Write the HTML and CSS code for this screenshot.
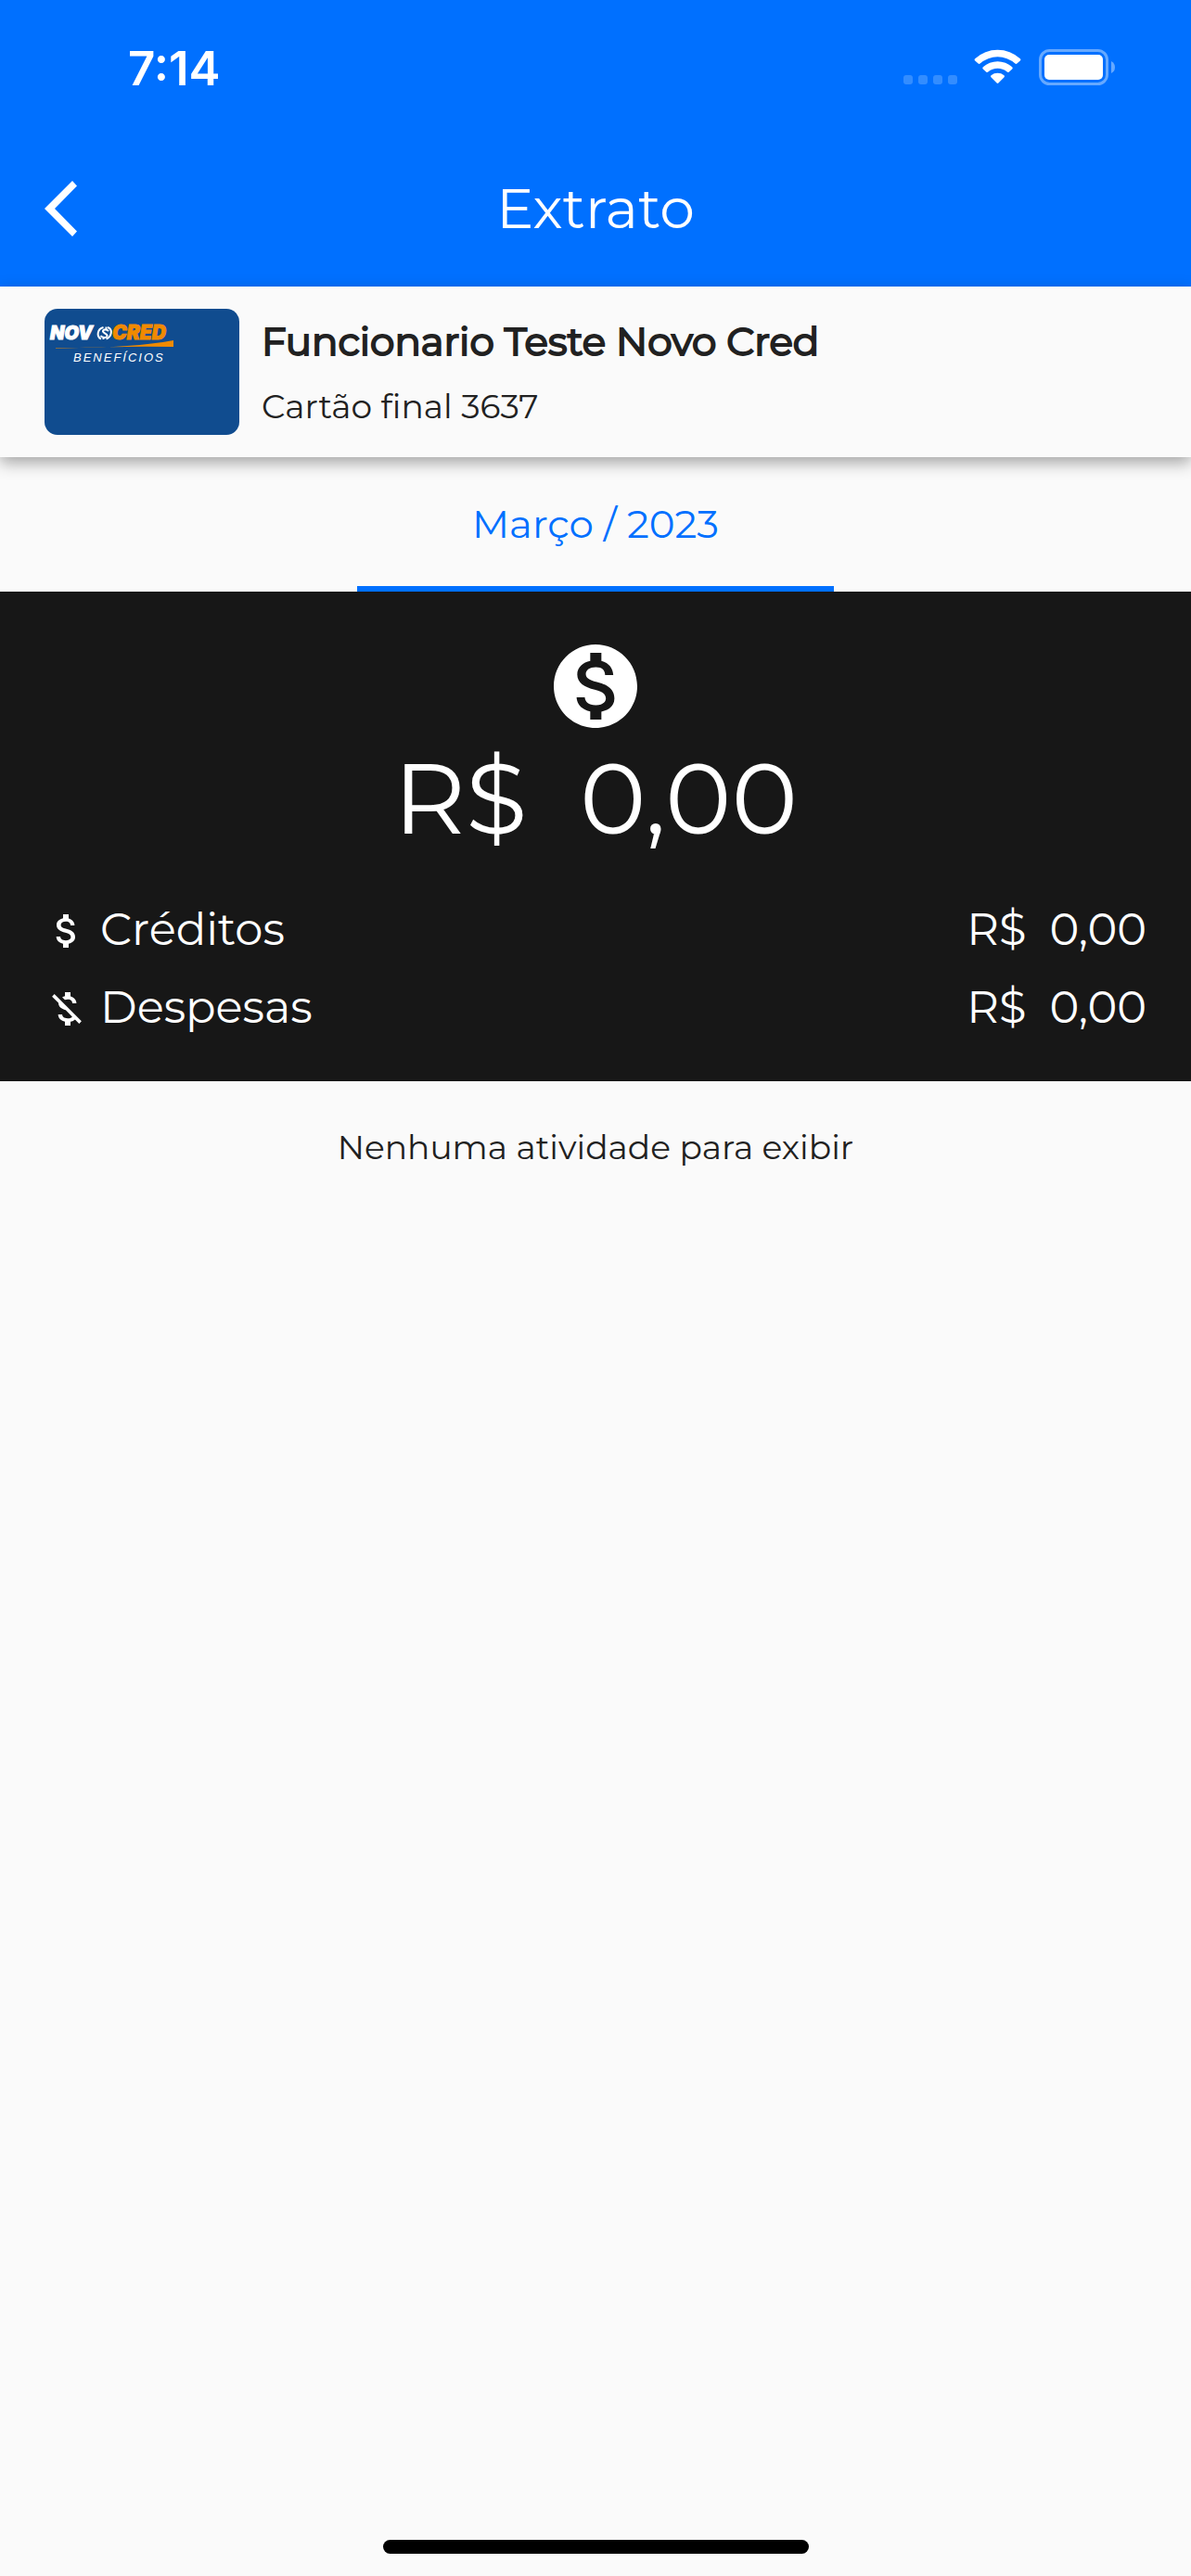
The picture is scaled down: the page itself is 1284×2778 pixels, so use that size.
FILE: index.html
```
<!DOCTYPE html>
<html lang="pt-BR">
<head>
    <meta charset="UTF-8" />
    <meta name="viewport" content="width=device-width, initial-scale=1">
    <title>Extrato</title>
    <link rel="stylesheet" href="styles.css">
</head>

<body>
<header class="header">
    <div class="status-bar">
        <div class="status-time">7:14</div>
        <div class="status-icons">
            <svg class="icon-signal" viewBox="0 0 58 38">
                <rect x="0" y="28" width="10" height="10" rx="3" />
                <rect x="16" y="28" width="10" height="10" rx="3" />
                <rect x="32" y="28" width="10" height="10" rx="3" />
                <rect x="48" y="28" width="10" height="10" rx="3" />
            </svg>
            <svg class="icon-wifi" viewBox="0 0 52 38">
                <path d="M1.2 10.2Q0 11.4 1.2 12.6L4.6 15.6Q5.6 16.4 6.6 15.5A28.5 28.5 0 0 1 44.4 15.5Q45.4 16.4 46.4 15.6L49.8 12.6Q51 11.4 49.8 10.2A36 36 0 0 0 1.2 10.2Z" />
                <path d="M9.8 19.2Q8.6 20.4 9.8 21.5L13.4 24.7Q14.3 25.4 15.3 24.6A15.8 15.8 0 0 1 35.7 24.6Q36.7 25.4 37.6 24.7L41.2 21.5Q42.4 20.4 41.2 19.2A23.5 23.5 0 0 0 9.8 19.2Z" />
                <path d="M18.5 28.2Q17.4 29.3 18.6 30.4L24.6 36.5Q25.5 37.4 26.4 36.5L32.4 30.4Q33.6 29.3 32.5 28.2A11.5 11.5 0 0 0 18.5 28.2Z" />
            </svg>
            <svg class="icon-battery" viewBox="0 0 82 40">
                <rect class="battery-shell" x="1.5" y="1.5" width="72" height="36" rx="10" />
                <rect x="6" y="6" width="63" height="27" rx="5" />
                <path class="battery-cap" d="M78 13Q82 15 82 19.5T78 26Z" />
            </svg>
        </div>
    </div>
    <div class="app-bar">
        <button class="back-button" aria-label="Voltar">
            <svg viewBox="0 0 36 60">
                <path d="M0 30L30 0L35 5.5L11 30L35 54.5L30 60Z" />
            </svg>
        </button>
        <h1 class="app-title">Extrato</h1>
    </div>
</header>

<section class="account">
    <svg class="card" viewBox="0 0 210 136" role="img" aria-label="Novocred Benefícios">
        <defs>
            <linearGradient id="swoosh">
                <stop offset="0" stop-color="#f08a00" stop-opacity="0.5" />
                <stop offset="0.3" stop-color="#f08a00" />
            </linearGradient>
        </defs>
        <rect class="card-bg" width="210" height="136" rx="14" />
        <text class="logo-novo" x="6" y="33">NOV</text>
        <g class="logo-coin">
            <path d="M63.5 20C57 21.500 55.500 30 61 32.500" />
            <path d="M68 20C74 22 72.500 30 66.500 32.500" />
            <path d="M69 24C66.500 21.500 62.500 22.500 63 24.500S68.500 27 67.500 29.500S62 31 60.500 29M66.500 19.500V22M63.500 30.500V33" />
        </g>
        <text class="logo-cred" x="73" y="33">CRED</text>
        <path fill="url(#swoosh)" d="M12 42Q90 43 139 34V41Q80 40 12 43Z" />
        <text class="logo-sub" x="31" y="57">BENEFÍCIOS</text>
    </svg>
    <div class="account-info">
        <div class="account-name">Funcionario Teste Novo Cred</div>
        <div class="account-card">Cartão final 3637</div>
    </div>
</section>

<nav class="months">
    <button class="month active">Março / 2023</button>
</nav>

<section class="summary">
    <svg class="icon-coin" viewBox="0 0 24 24">
        <path d="M12 2C6.480 2 2 6.480 2 12s4.480 10 10 10 10-4.480 10-10S17.520 2 12 2zm1.410 16.090V20h-2.670v-1.930c-1.710-.36-3.160-1.460-3.270-3.400h1.960c.1 1.050.82 1.870 2.650 1.870 1.960 0 2.400-.98 2.400-1.590 0-.83-.44-1.610-2.670-2.140-2.480-.6-4.180-1.620-4.180-3.670 0-1.720 1.390-2.840 3.110-3.210V4h2.670v1.950c1.860.45 2.790 1.860 2.850 3.390H14.300c-.05-1.110-.64-1.870-2.220-1.870-1.500 0-2.400.68-2.400 1.640 0 .84.65 1.390 2.670 1.910s4.180 1.390 4.180 3.910c-.02 1.830-1.380 2.830-3.120 3.160z" />
    </svg>
    <div class="balance">R$&nbsp; 0,00</div>
    <div class="summary-rows">
        <div class="summary-row">
            <svg class="row-icon" viewBox="0 0 24 24">
                <path d="M11.8 10.9c-2.270-.59-3-1.200-3-2.150 0-1.090 1.010-1.850 2.700-1.850 1.780 0 2.440.85 2.500 2.100h2.210c-.07-1.720-1.120-3.300-3.210-3.810V3h-3v2.160c-1.940.42-3.500 1.680-3.500 3.610 0 2.310 1.910 3.460 4.700 4.130 2.500.6 3 1.480 3 2.410 0 .69-.49 1.790-2.700 1.790-2.060 0-2.870-.92-2.980-2.100h-2.200c.12 2.190 1.760 3.420 3.680 3.830V21h3v-2.150c1.950-.37 3.500-1.500 3.500-3.550 0-2.840-2.430-3.810-4.700-4.400z" />
            </svg>
            <span class="row-label">Créditos</span>
            <span class="row-value">R$&nbsp; 0,00</span>
        </div>
        <div class="summary-row">
            <svg class="row-icon" viewBox="0 0 24 24">
                <path d="M12.5 6.9c1.780 0 2.440.85 2.500 2.100h2.210c-.07-1.720-1.120-3.300-3.210-3.810V3h-3v2.160c-.53.12-1.030.3-1.480.54l1.470 1.470c.41-.17.91-.27 1.510-.27zM5.330 4.060L4.060 5.330 7.500 8.770c0 2.080 1.560 3.210 3.910 3.910l3.510 3.510c-.34.48-1.050.91-2.420.91-2.060 0-2.870-.92-2.980-2.100h-2.200c.12 2.190 1.760 3.420 3.680 3.830V21h3v-2.150c.96-.18 1.820-.55 2.450-1.120l2.220 2.220 1.270-1.270L5.330 4.060z" />
            </svg>
            <span class="row-label">Despesas</span>
            <span class="row-value">R$&nbsp; 0,00</span>
        </div>
    </div>
</section>

<main class="activity">
    <p class="empty">Nenhuma atividade para exibir</p>
</main>

<div class="home-indicator"></div>
</body>
</html>
```

FILE: styles.css
```
* {
    margin: 0;
    padding: 0;
    box-sizing: border-box;
}

:root {
    --primary: #0070ff;
    --page-bg: #fafafa;
    --dark-bg: #171717;
    --text-color: #212121;
    --card-bg: #104c8f;
    --orange: #f08a00;
}

body {
    background-color: var(--page-bg);
    color: var(--text-color);
    font-family: Montserrat, Inter, sans-serif;
    font-size: 36px;
    font-weight: 400;
    min-height: 100vh;
    display: flex;
    flex-direction: column;
}

button {
    background: none;
    border: none;
    font: inherit;
    cursor: pointer;
}

svg {
    display: block;
    flex-shrink: 0;
}

/* Header */
.header {
    background-color: var(--primary);
    color: white;
}

.status-bar {
    display: flex;
    justify-content: space-between;
    align-items: flex-start;
    height: 141px;
    padding: 44px 82px 0 138px;
}

.status-time {
    font-family: Inter, sans-serif;
    font-size: 51px;
    font-weight: 600;
    line-height: 60px;
}

.status-icons {
    display: flex;
    gap: 18px;
    padding-top: 9px;
    fill: white;
}

.icon-signal {
    width: 58px;
    height: 38px;
    opacity: 0.2;
}

.icon-wifi {
    width: 52px;
    height: 38px;
}

.icon-battery {
    width: 82px;
    height: 40px;
}

.battery-shell {
    fill: none;
    stroke: white;
    stroke-width: 3px;
    opacity: 0.4;
}

.battery-cap {
    opacity: 0.4;
}

.app-bar {
    display: grid;
    grid-template-columns: 1fr auto 1fr;
    align-items: center;
    height: 168px;
    padding: 0 48px;
}

.back-button {
    width: 36px;
    height: 60px;
    fill: white;
}

.app-title {
    font-size: 60px;
    font-weight: 400;
    line-height: 72px;
}

/* Account */
.account {
    display: flex;
    gap: 24px;
    padding: 24px 48px;
    background-color: var(--page-bg);
    box-shadow: 0 6px 16px rgba(0, 0, 0, 0.35);
    z-index: 1;
}

.card {
    width: 210px;
    height: 136px;
}

.card-bg {
    fill: var(--card-bg);
}

.logo-novo,
.logo-cred {
    fill: white;
    stroke: white;
    stroke-width: 1px;
    font-family: Inter, sans-serif;
    font-size: 20px;
    font-style: italic;
    font-weight: 900;
}

.logo-cred {
    fill: var(--orange);
    stroke: var(--orange);
    font-size: 21px;
}

.logo-coin {
    fill: none;
    stroke: white;
    stroke-width: 2px;
}

.logo-sub {
    fill: white;
    font-family: "Liberation Sans", sans-serif;
    font-size: 13px;
    font-style: italic;
    font-weight: 400;
    letter-spacing: 2px;
}

.account-info {
    display: flex;
    flex-direction: column;
    justify-content: center;
    gap: 20px;
    padding-top: 2px;
}

.account-name {
    font-size: 42px;
    line-height: 52px;
    -webkit-text-stroke: 2px currentColor;
}

.account-card {
    line-height: 48px;
}

/* Months */
.months {
    display: flex;
    justify-content: center;
}

.month {
    width: 40%;
    height: 145px;
    padding-top: 4px;
    color: var(--primary);
    font-size: 42px;
    border-bottom: 6px solid transparent;
}

.month.active {
    border-color: var(--primary);
}

/* Summary */
.summary {
    display: flex;
    flex-direction: column;
    align-items: center;
    background-color: var(--dark-bg);
    color: white;
    fill: white;
    padding: 48px 48px 38px;
}

.icon-coin {
    width: 108px;
    height: 108px;
}

.balance {
    font-size: 108px;
    line-height: 132px;
}

.summary-rows {
    align-self: stretch;
    padding-top: 34px;
}

.summary-row {
    display: flex;
    align-items: center;
    gap: 12px;
    height: 84px;
    font-size: 48px;
}

.row-icon {
    width: 48px;
    height: 48px;
    margin-top: 4px;
}

.row-value {
    margin-left: auto;
}

/* Activity */
.activity {
    flex: 1;
    padding: 47px 48px;
    text-align: center;
}

.empty {
    line-height: 48px;
}

.home-indicator {
    align-self: center;
    width: 459px;
    height: 15px;
    margin-bottom: 24px;
    border-radius: 8px;
    background-color: black;
}
```
